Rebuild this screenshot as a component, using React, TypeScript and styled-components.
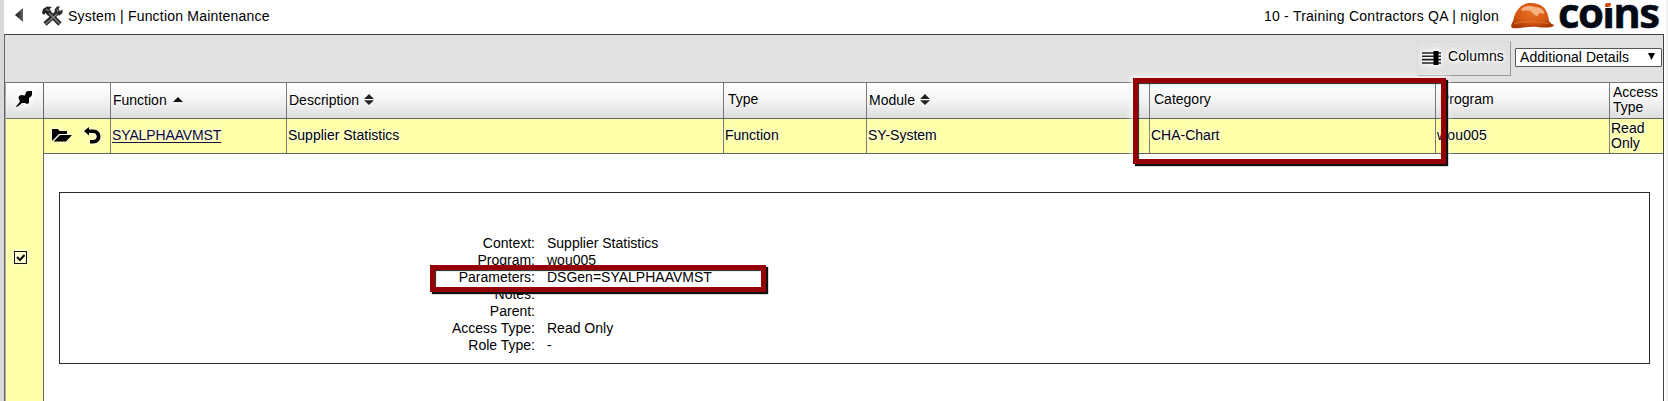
import React from "react";
import styled, { createGlobalStyle } from "styled-components";

const Global = createGlobalStyle`
  * { box-sizing: border-box; }
  body { margin: 0; overflow: hidden; background: #d9d9db; color: #000;
    font: 14px/16px "Liberation Sans", Arial, sans-serif; }
  svg { display: block; flex: none; }
`;

const Page = styled.div`
  position: relative;
  height: 401px;
  padding: 0 2px 0 4px;
  background: linear-gradient(90deg, #d9d9db 0 4px, #fff 4px 1666px, #f0eff0 1666px);
`;
const TopBar = styled.header`
  height: 34px;
  display: flex;
  align-items: flex-start;
  padding-left: 11px;
`;
const Text = styled.span<{ $ls?: number }>`
  letter-spacing: ${(p) => p.$ls ?? 0}px;
  white-space: pre;
`;
const IconSlot = styled.div<{ $top: number; $left?: number }>`
  margin: ${(p) => p.$top}px 0 0 ${(p) => p.$left ?? 0}px;
`;
const Title = styled(Text)`margin: 8px 0 0 5px;`;
const Company = styled(Text)`margin: 8px 12px 0 auto;`;
const Brand = styled.div`
  width: 112px;
  height: 34px;
  padding-left: 4px;
  font: 700 42px/24px "Open Sans", sans-serif;
  letter-spacing: -1.7px;
  white-space: nowrap;
  color: #050b16;
  -webkit-text-stroke: 0.5px #050b16;
`;
const DottedI = styled.span`
  position: relative;
  display: inline-block;
  &::before {
    content: "";
    position: absolute;
    left: 0;
    top: -8px;
    width: 11px;
    height: 16px;
    background: #fff;
  }
  &::after {
    content: "";
    position: absolute;
    left: 3px;
    top: 3px;
    width: 6px;
    height: 4px;
    border-radius: 2px 1px 3px 1px;
    background: #c94c12;
  }
`;
const Panel = styled.main`
  width: 1660px;
  height: 367px;
  border: 1px solid #444;
  border-left-color: #666;
  border-bottom: 0;
  background: #fff;
`;
const Toolbar = styled.div`
  height: 47px;
  display: flex;
  justify-content: flex-end;
  background: #e1e1e1;
  padding: 6px 1px 0 0;
`;
const ColumnsButton = styled.div`
  width: 94px;
  height: 35px;
  display: flex;
  align-items: flex-start;
  gap: 7px;
  padding: 6px 0 0 4px;
  border: 1px solid #999;
  border-top-color: #d9d9d9;
  border-left-color: #d9d9d9;
  text-shadow: 0 0 3px #fff, 0 0 3px #fff, 0 0 4px #fff, 0 0 5px #fff, 0 0 6px #fff;
  svg { margin-top: 3px; filter: drop-shadow(0 0 2px #fff) drop-shadow(0 0 3px #fff); }
`;
const Select = styled.div`
  width: 147px;
  height: 19px;
  margin: 7px 0 0 4px;
  padding: 0 6px 2px 4px;
  display: flex;
  align-items: center;
  justify-content: space-between;
  border: 1px solid #555;
  border-radius: 1px;
  background: #fff;
`;
const Body = styled.div`
  display: flex;
  height: 319px;
  border-top: 1px solid #777;
  border-left: 1px solid #aaa;
`;
const Pinned = styled.div`
  width: 38px;
  border-right: 1px solid #666;
  background: #ffffa8;
`;
const PinHead = styled.div`
  height: 36px;
  display: flex;
  padding: 8px 0 0 10px;
  border-bottom: 1px solid #777;
  background: linear-gradient(#fff, #f5f5f5 45%, #dedede);
  svg { filter: drop-shadow(0 0 3px #fff) drop-shadow(0 0 3px #fff); }
`;
const Check = styled.div`
  display: flex;
  width: 13px;
  height: 13px;
  margin: 132px 0 0 8px;
  border: 1px solid #111;
  background: #ffffd2;
  box-shadow: 0 0 4px #fff;
`;
const Main = styled.div`flex: 1;`;
const Row = styled.div`
  display: grid;
  grid-template-columns: 67px 176px 437px 143px 283px 286px 174px 53px;
  border-bottom: 1px solid #666;
`;
const HeadRow = styled(Row)`
  height: 36px;
  background: linear-gradient(#fff, #f5f5f5 45%, #dedede);
`;
const DataRow = styled(Row)`
  height: 35px;
  background: #ffffa8;
`;
const Cell = styled.div<{ $pad?: number; $top?: number }>`
  display: flex;
  align-items: flex-start;
  padding: ${(p) => p.$top ?? 9}px 0 0 ${(p) => p.$pad ?? 1}px;
  border-right: 1px solid #777;
  line-height: 15px;
  text-shadow: 0 0 3px #fff, 0 0 5px #fff;
  &:last-child { border-right: 0; }
`;
const SortMark = styled.span<{ $top: number; $left: number }>`
  margin: ${(p) => p.$top}px 0 0 ${(p) => p.$left}px;
  svg { filter: drop-shadow(0 0 2px #fff); }
`;
const Link = styled(Text)`
  color: #0b0836;
  border-bottom: 1px solid #0b0836;
  height: 15px;
`;
const IconCell = styled(Cell)`
  gap: 12px;
  svg { filter: drop-shadow(0 0 2px #fff); }
`;
const Details = styled.section`
  width: 1591px;
  height: 172px;
  margin: 38px 0 0 15px;
  border: 1px solid #2b2b2b;
  padding-top: 42px;
`;
const Field = styled.div`
  display: grid;
  grid-template-columns: 475px auto;
  column-gap: 12px;
  height: 17px;
  line-height: 17px;
  > :first-child { text-align: right; }
`;
const Highlight = styled.div<{ $x: number; $y: number; $w: number; $h: number; $glow?: boolean }>`
  position: absolute;
  left: ${(p) => p.$x}px;
  top: ${(p) => p.$y}px;
  width: ${(p) => p.$w}px;
  height: ${(p) => p.$h}px;
  border: 5px solid #940005;
  box-shadow: 2px 2px 1px #111, inset 1px 1px 1px #222
    ${(p) => (p.$glow ? ", 0 0 5px 3px rgba(255, 255, 255, 0.55)" : "")};
`;

const Up = () => (
  <svg width="10" height="5" viewBox="0 0 10 5"><path d="M5 0 10 5H0Z" fill="#111" /></svg>
);
const UpDown = () => (
  <svg width="10" height="11" viewBox="0 0 10 11"><path d="M5 0 10 5H0ZM0 6.3H10L5 11Z" fill="#222" /></svg>
);
const Back = () => (
  <svg width="8" height="14" viewBox="0 0 8 14">
    <defs>
      <linearGradient id="back" x1="0" y1="0" x2="1" y2="0">
        <stop offset="0" stopColor="#111" /><stop offset="1" stopColor="#666" />
      </linearGradient>
    </defs>
    <path d="M8 0V14L0 7Z" fill="url(#back)" />
  </svg>
);
const Tools = () => (
  <svg width="21" height="20" viewBox="0 0 21 20">
    <path d="M6 6 18 18" stroke="#2a2a2a" strokeWidth="4.6" />
    <path d="M15.5 6.5 3 18" stroke="#2a2a2a" strokeWidth="4.6" />
    <path d="M0 7 1 3 5 0.5 10 1 7.500 3 9.500 6 6 9.500 3.500 7 2 9Z" fill="#222" />
    <path d="M13 8 12.500 3.500 15 0.500 18 0.500 16.500 3 18 5 20.500 3.500 20.500 7 17.500 9.500Z" fill="#2d2d2d" />
    <path d="M7 7 17.500 17.500M15 8 3.500 18M4 3 7 5M15 3 16 6" stroke="#858585" strokeWidth="1.2" fill="none" />
  </svg>
);
const Helmet = () => (
  <svg width="43" height="26" viewBox="0 0 43 26">
    <defs>
      <radialGradient id="shell" cx=".5" cy=".4" r=".62">
        <stop offset="0" stopColor="#e8712a" /><stop offset=".6" stopColor="#d65812" /><stop offset="1" stopColor="#a83a08" />
      </radialGradient>
    </defs>
    <path d="M0 23C1 19 3 17 3 14 6 5 12 0 20 0 31 0 37 6 38 18 39 20 41 21 43 22 42 25 34 25 26 24 17 23 7 26 1 25Z" fill="url(#shell)" />
    <path d="M10 7C13 2.500 19 2 24 4 30 4 33 7 33 11 30 10 28 9 26.500 13 23 13 22 9 19 8 15 6.500 12 9 10 7Z" fill="#f6b182" />
    <path d="M3 21C13 17.500 28 18.500 37 20.500" stroke="#e0742f" strokeWidth="1" fill="none" />
  </svg>
);

const columns: { name: string; pad: number; top: number; sort?: "up" | "both" }[] = [
  { name: "Function", pad: 2, top: 10, sort: "up" },
  { name: "Description", pad: 2, top: 10, sort: "both" },
  { name: "Type", pad: 4, top: 9 },
  { name: "Module", pad: 2, top: 10, sort: "both" },
  { name: "Category", pad: 4, top: 9 },
  { name: "Program", pad: 4, top: 9 },
  { name: "Access\nType", pad: 3, top: 2 },
];
const fields = [
  ["Context:", "Supplier Statistics"],
  ["Program:", "wou005"],
  ["Parameters:", "DSGen=SYALPHAAVMST"],
  ["Notes:", ""],
  ["Parent:", ""],
  ["Access Type:", "Read Only"],
  ["Role Type:", "-"],
];

export default function App() {
  return (
    <Page>
      <Global />
      <TopBar>
        <IconSlot $top={8}><Back /></IconSlot>
        <IconSlot $top={6} $left={19}><Tools /></IconSlot>
        <Title $ls={0.2}>System | Function Maintenance</Title>
        <Company $ls={0.24}>10 - Training Contractors QA | niglon</Company>
        <IconSlot $top={3}><Helmet /></IconSlot>
        <Brand>co<DottedI>i</DottedI>ns</Brand>
      </TopBar>
      <Panel>
        <Toolbar>
          <ColumnsButton>
            <svg width="19" height="14" viewBox="0 0 19 14">
              <path d="M0 2H19M0 5.3H19M0 8.6H19M0 12H19" stroke="#222" strokeWidth="1.6" />
              <path d="M11.500 0H16.500V14H11.500Z" fill="#000" />
            </svg>
            <Text $ls={0.1}>Columns</Text>
          </ColumnsButton>
          <Select>
            <Text $ls={0.05}>Additional Details</Text>
            <svg width="7" height="7" viewBox="0 0 7 7"><path d="M0 0H7L3.5 7Z" fill="#000" /></svg>
          </Select>
        </Toolbar>
        <Body>
          <Pinned>
            <PinHead>
              <svg width="17" height="17" viewBox="0 0 17 17">
                <path d="M10 1 12 0H16V4L14.500 6 13 7V12L11 13 9 12 6 12 1 16 0 15.500 4 10.500 2.500 7 3 5 5 4 9 4.500Z" fill="#000" />
              </svg>
            </PinHead>
            <Check>
              <svg width="11" height="11" viewBox="0 0 11 11"><path d="M2 5 5 8 9.5 3" stroke="#111" strokeWidth="2.2" fill="none" /></svg>
            </Check>
          </Pinned>
          <Main>
            <HeadRow>
              <Cell />
              {columns.map((c) => (
                <Cell key={c.name} $pad={c.pad} $top={c.top}>
                  <Text>{c.name}</Text>
                  {c.sort === "up" && <SortMark $top={4} $left={6}><Up /></SortMark>}
                  {c.sort === "both" && <SortMark $top={1} $left={5}><UpDown /></SortMark>}
                </Cell>
              ))}
            </HeadRow>
            <DataRow>
              <IconCell $pad={8} $top={8}>
                <svg width="20" height="17" viewBox="0 0 20 17">
                  <path d="M0 2H6L7.500 4H15V7H7L0.500 13.500H0Z" fill="#000" /><path d="M8 8H20L14 14.500H1.500Z" fill="#000" />
                </svg>
                <svg width="17" height="17" viewBox="0 0 17 17">
                  <path d="M0 4 5 0V2.500H9C19 2.500 19 16.500 9 16.500H6V13H9C14 13 14 6 9 6H5V8.500Z" fill="#000" />
                </svg>
              </IconCell>
              <Cell><Link $ls={-0.13}>SYALPHAAVMST</Link></Cell>
              <Cell>Supplier Statistics</Cell>
              <Cell>Function</Cell>
              <Cell>SY-System</Cell>
              <Cell>CHA-Chart</Cell>
              <Cell $pad={1}><Text $ls={0.15}>wou005</Text></Cell>
              <Cell $pad={1} $top={2}><Text>{"Read\nOnly"}</Text></Cell>
            </DataRow>
            <Details>
              {fields.map(([label, value]) => (
                <Field key={label}><Text>{label}</Text><Text>{value}</Text></Field>
              ))}
            </Details>
          </Main>
        </Body>
      </Panel>
      <Highlight $x={1133} $y={78} $w={313} $h={86} $glow />
      <Highlight $x={430} $y={265} $w={336} $h={27} />
    </Page>
  );
}
